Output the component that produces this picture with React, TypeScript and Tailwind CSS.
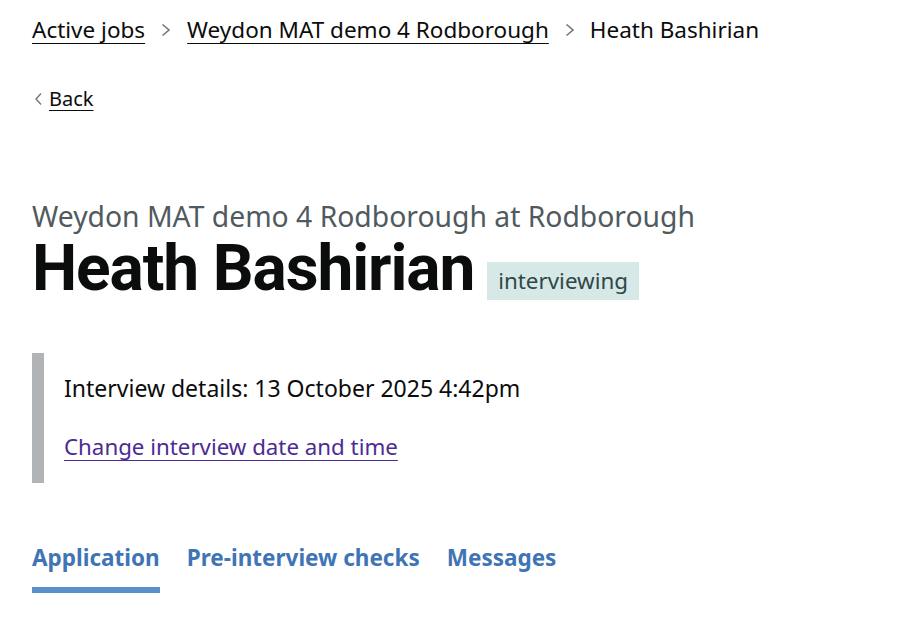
export default function App() {
  return (
    <div className="min-h-[622px] bg-white px-8 text-[#0b0c0c]" style={{ fontFamily: '"Noto Sans", Arial, sans-serif' }}>
      {/* Breadcrumbs */}
      <nav className="pt-[14px]">
        <ol className="flex items-center text-[22.5px] leading-[32px]">
          <li className="flex items-center">
            <a href="#" className="underline decoration-1 underline-offset-[5px]">Active jobs</a>
          </li>
          <li className="flex items-center">
            <span className="ml-[16px] mr-[16px]">
              <svg width="10" height="16" viewBox="0 0 10 16" fill="none" stroke="#6f777b" strokeWidth="1.6">
                <path d="M1.5 2.5l6.5 5.5-6.5 5.5" />
              </svg>
            </span>
            <a href="#" className="underline decoration-1 underline-offset-[5px]">Weydon MAT demo 4 Rodborough</a>
          </li>
          <li className="flex items-center">
            <span className="ml-[16px] mr-[15px]">
              <svg width="10" height="16" viewBox="0 0 10 16" fill="none" stroke="#6f777b" strokeWidth="1.6">
                <path d="M1.5 2.5l6.5 5.5-6.5 5.5" />
              </svg>
            </span>
            <span>Heath Bashirian</span>
          </li>
        </ol>
      </nav>

      {/* Back link */}
      <a href="#" className="mt-[40px] flex items-center gap-[7px] pl-[3px] text-[20px] leading-[26px]">
        <svg width="7" height="14" viewBox="0 0 7 14" fill="none" stroke="#6f777b" strokeWidth="1.4">
          <path d="M6 1.5L1 7l5 5.5" />
        </svg>
        <span className="underline decoration-1 underline-offset-[4px]">Back</span>
      </a>

      {/* Heading */}
      <div className="mt-[86px]">
        <span className="block text-[28.3px] leading-[36px] text-[#505a5f]">Weydon MAT demo 4 Rodborough at Rodborough</span>
        <h1 className="mt-[3px] flex items-end gap-[13px]">
          <span className="text-[64px] font-bold leading-[64px] tracking-[-1.1px]" style={{ fontFamily: 'Roboto, Arial, sans-serif' }}>
            Heath Bashirian
          </span>
          <strong className="mb-[1px] bg-[#d7e9e7] px-[11px] py-[5px] text-[22.4px] font-normal leading-[28px] text-[#2f4847]">
            interviewing
          </strong>
        </h1>
      </div>

      {/* Inset text */}
      <div className="mt-[52px] border-l-[12px] border-[#b1b4b6] pb-[21px] pl-[20px] pt-[20px]">
        <p className="text-[23px] leading-[30px]">Interview details: 13 October 2025 4:42pm</p>
        <a href="#" className="mt-[29px] block w-fit text-[22.3px] leading-[30px] text-[#4c2c92] underline decoration-1 underline-offset-[5px]">
          Change interview date and time
        </a>
      </div>

      {/* Tabs */}
      <nav className="mt-[59px] flex gap-[27px]">
        <a href="#" className="border-b-[6px] border-[#5b8fc9] pb-[13px] text-[22.5px] font-bold leading-[32px] text-[#3f74b5]">
          Application
        </a>
        <a href="#" className="pb-[13px] text-[22.5px] font-bold leading-[32px] text-[#3f74b5]">
          Pre-interview checks
        </a>
        <a href="#" className="pb-[13px] text-[22.5px] font-bold leading-[32px] text-[#3f74b5]">
          Messages
        </a>
      </nav>
    </div>
  );
}
